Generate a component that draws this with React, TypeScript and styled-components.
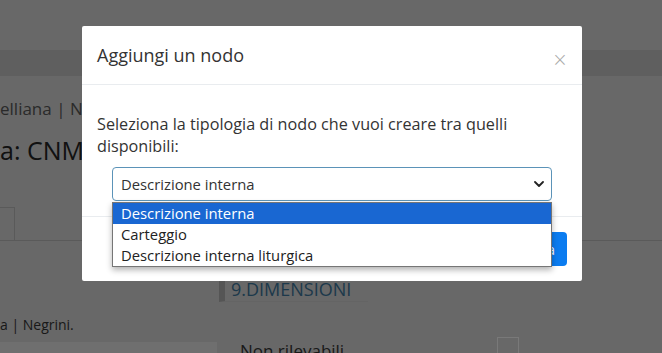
import React from 'react'
import styled, { createGlobalStyle } from 'styled-components'

const GlobalStyle = createGlobalStyle`
  html, body {
    margin: 0;
    padding: 0;
    font-family: "Open Sans", "Liberation Sans", sans-serif;
    color: #333;
  }
`

const options = ['Descrizione interna', 'Carteggio', 'Descrizione interna liturgica']

const App: React.FC = () => {
  return (
    <>
      <GlobalStyle />
      <Page>
        <TopHeader />
        <NavBand />
        <Breadcrumb>elliana | Negrini</Breadcrumb>
        <PageTitle>a: CNMD\0000012345</PageTitle>
        <Tabs>
          <Tab />
        </Tabs>
        <ContentRow>
          <LeftColumn>
            <Author>a | Negrini.</Author>
            <InfoBar>Alt</InfoBar>
          </LeftColumn>
          <RightColumn>
            <SectionHeading>9.DIMENSIONI</SectionHeading>
            <CheckRow>
              <CheckLabel>Non rilevabili</CheckLabel>
              <CheckBox />
            </CheckRow>
          </RightColumn>
        </ContentRow>
      </Page>

      <Backdrop />

      <Modal>
        <ModalHeader>
          <ModalTitle>Aggiungi un nodo</ModalTitle>
          <CloseButton>×</CloseButton>
        </ModalHeader>
        <ModalBody>
          <Intro>Seleziona la tipologia di nodo che vuoi creare tra quelli disponibili:</Intro>
          <SelectWrap>
            <SelectBox>
              <span>Descrizione interna</span>
              <svg width="10" height="6" viewBox="0 0 10 6">
                <path d="M1 1 L5 5 L9 1" fill="none" stroke="#222" strokeWidth="1.8" strokeLinecap="round" strokeLinejoin="round" />
              </svg>
            </SelectBox>
            <OptionList>
              {options.map((o, i) => (
                <OptionItem key={o} $active={i === 0}>{o}</OptionItem>
              ))}
            </OptionList>
          </SelectWrap>
        </ModalBody>
        <ModalFooter>
          <SecondaryButton>Annulla</SecondaryButton>
          <PrimaryButton>Crea</PrimaryButton>
        </ModalFooter>
      </Modal>
    </>
  )
}

export default App

const Page = styled.div`
  width: 662px;
  height: 353px;
  overflow: hidden;
  background: #d0d0d0;
  display: flex;
  flex-direction: column;
`
const TopHeader = styled.div`
  height: 50px;
  flex-shrink: 0;
`
const NavBand = styled.div`
  height: 26px;
  flex-shrink: 0;
  background: #bfbfbf;
`
const Breadcrumb = styled.div`
  margin-top: 21px;
  font-size: 17px;
  line-height: 24px;
  color: #555;
  white-space: nowrap;
`
const PageTitle = styled.h1`
  margin: 12px 0 0;
  font-size: 25px;
  font-weight: 400;
  line-height: 34px;
  color: #222;
  white-space: nowrap;
`
const Tabs = styled.div`
  margin-top: 40px;
  height: 33px;
  flex-shrink: 0;
  border-bottom: 1px solid #b4b4b4;
  display: flex;
`
const Tab = styled.div`
  width: 15px;
  height: 33px;
  border-top: 1px solid #b4b4b4;
  border-right: 1px solid #b4b4b4;
  box-sizing: border-box;
  background: #d0d0d0;
  margin-bottom: -1px;
`
const ContentRow = styled.div`
  display: flex;
  gap: 2px;
`
const LeftColumn = styled.div`
  width: 217px;
  display: flex;
  flex-direction: column;
`
const Author = styled.div`
  margin-top: 73px;
  font-size: 14px;
  line-height: 22px;
  color: #333;
`
const InfoBar = styled.div`
  margin-top: 6px;
  height: 30px;
  background: #dedede;
  font-size: 14px;
  padding: 9px 6px 0;
  color: #333;
`
const RightColumn = styled.div`
  flex: 1;
  display: flex;
  flex-direction: column;
`
const SectionHeading = styled.h3`
  margin: 37px 0 0;
  align-self: flex-start;
  width: 137px;
  border-left: 6px solid #aaa;
  border-bottom: 1px solid #c8c8c8;
  padding-left: 6px;
  font-size: 18px;
  font-weight: 400;
  line-height: 23px;
  color: #3a7296;
  white-space: nowrap;
`
const CheckRow = styled.div`
  margin-top: 35px;
  display: flex;
  align-items: flex-start;
  padding-left: 21px;
`
const CheckLabel = styled.div`
  width: 257px;
  font-size: 17px;
  line-height: 24px;
  padding-top: 2px;
  color: #333;
`
const CheckBox = styled.div`
  width: 22px;
  height: 22px;
  box-sizing: border-box;
  border: 1px solid #f2f2f2;
`
const Backdrop = styled.div`
  position: fixed;
  inset: 0;
  background: rgba(0, 0, 0, 0.5);
`
const Modal = styled.div`
  position: absolute;
  top: 26px;
  left: 82px;
  width: 500px;
  background: #fff;
  border-radius: 2px;
  display: flex;
  flex-direction: column;
`
const ModalHeader = styled.div`
  display: flex;
  align-items: center;
  justify-content: space-between;
  padding: 15px;
  border-bottom: 1px solid #e9ecef;
`
const ModalTitle = styled.h5`
  margin: 0;
  font-size: 18px;
  font-weight: 400;
  line-height: 28px;
  color: #333;
`
const CloseButton = styled.span`
  font-size: 19px;
  line-height: 20px;
  margin-top: 8px;
  margin-right: -1px;
  color: #aaa;
  font-family: "DejaVu Sans", sans-serif;
  font-weight: 300;
`
const ModalBody = styled.div`
  padding: 28px 15px 15px;
  display: flex;
  flex-direction: column;
`
const Intro = styled.p`
  margin: 0;
  font-size: 16.2px;
  line-height: 22px;
  color: #333;
`
const SelectWrap = styled.div`
  position: relative;
  margin: 10px 15px 0;
`
const SelectBox = styled.div`
  height: 34px;
  box-sizing: border-box;
  border: 1px solid #5b93b8;
  border-radius: 4px;
  padding: 0 7px 0 8px;
  display: flex;
  align-items: center;
  justify-content: space-between;
  font-size: 14.8px;
  color: #333;
`
const OptionList = styled.div`
  position: absolute;
  top: 35px;
  left: 0;
  right: 0;
  background: #fff;
  border: 1px solid #767676;
  box-shadow: 0 3px 6px rgba(0, 0, 0, 0.3);
  z-index: 2;
`
const OptionItem = styled.div<{ $active?: boolean }>`
  height: 21px;
  line-height: 21px;
  padding-left: 8px;
  font-size: 14.8px;
  background: ${({ $active }) => ($active ? '#1967d2' : '#fff')};
  color: ${({ $active }) => ($active ? '#fff' : '#222')};
`
const ModalFooter = styled.div`
  display: flex;
  justify-content: flex-end;
  gap: 6px;
  padding: 15px;
  border-top: 1px solid #e9ecef;
`
const SecondaryButton = styled.button`
  height: 34px;
  padding: 0 12px;
  border: none;
  border-radius: 4px;
  background: #6c757d;
  color: #fff;
  font-family: inherit;
  font-size: 14.4px;
`
const PrimaryButton = styled.button`
  height: 34px;
  padding: 0 12px;
  border: none;
  border-radius: 4px;
  background: #0b7cf0;
  color: #fff;
  font-family: inherit;
  font-size: 14.4px;
`
